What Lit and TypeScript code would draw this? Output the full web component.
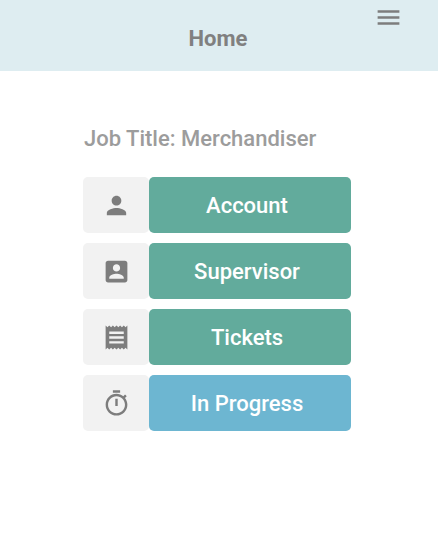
import { LitElement, html, css, svg } from "lit";
import { customElement } from "lit/decorators.js";
import { classMap } from "lit/directives/class-map.js";

interface Entry {
  label: string;
  icon: string;
  active?: boolean;
}

const MENU = "M3 18h18v-2H3v2zm0-5h18v-2H3v2zm0-7v2h18V6H3z";

const ENTRIES: Entry[] = [
  {
    label: "Account",
    icon: "M12 12c2.21 0 4-1.79 4-4s-1.79-4-4-4-4 1.79-4 4 1.79 4 4 4zm0 2c-2.67 0-8 1.34-8 4v2h16v-2c0-2.66-5.33-4-8-4z",
  },
  {
    label: "Supervisor",
    icon: "M3 5v14c0 1.1.89 2 2 2h14c1.1 0 2-.9 2-2V5c0-1.1-.9-2-2-2H5c-1.11 0-2 .9-2 2zm12 4c0 1.66-1.34 3-3 3s-3-1.34-3-3 1.34-3 3-3 3 1.34 3 3zm-9 8c0-2 4-3.1 6-3.1s6 1.1 6 3.1v1H6v-1z",
  },
  {
    label: "Tickets",
    icon: "M18 17H6v-2h12v2zm0-4H6v-2h12v2zm0-4H6V7h12v2zM3 22l1.5-1.5L6 22l1.5-1.5L9 22l1.5-1.5L12 22l1.5-1.5L15 22l1.5-1.5L18 22l1.5-1.5L21 22V2l-1.5 1.5L18 2l-1.5 1.5L15 2l-1.5 1.5L12 2l-1.5 1.5L9 2 7.5 3.5 6 2 4.5 3.5 3 2v20z",
  },
  {
    label: "In Progress",
    icon: "M15 1H9v2h6V1zm-4 13h2V8h-2v6zm8.03-6.61l1.42-1.42c-.43-.51-.9-.99-1.41-1.41l-1.42 1.42C16.07 4.74 14.12 4 12 4c-4.97 0-9 4.03-9 9s4.02 9 9 9 9-4.03 9-9c0-2.12-.74-4.07-1.97-5.61zM12 20c-3.87 0-7-3.13-7-7s3.13-7 7-7 7 3.13 7 7-3.13 7-7 7z",
    active: true,
  },
];

const icon = (d: string) => html`
  <svg class="icon" viewBox="0 0 24 24" aria-hidden="true">${svg`<path d=${d}></path>`}</svg>
`;

@customElement("app-root")
export class AppRoot extends LitElement {
  static styles = css`
    :host {
      display: block;
      min-height: 100vh;
      background: #fff;
      font-family: Roboto, "Liberation Sans", sans-serif;
      font-size: 22px;
      line-height: 28px;
    }
    header {
      display: grid;
      grid-template-columns: 1fr auto 1fr;
      align-items: start;
      box-sizing: border-box;
      height: 71px;
      padding: 3px 35px 0 33px;
      background: #deedf1;
    }
    h1 {
      grid-column: 2;
      margin: 0;
      padding-top: 22px;
      font-size: 22px;
      font-weight: 700;
      color: #808080;
    }
    .menu {
      justify-self: end;
      display: flex;
      padding: 0;
      border: 0;
      background: none;
      cursor: pointer;
    }
    .icon {
      display: block;
      width: 29px;
      height: 29px;
      fill: #7d7d7d;
    }
    main {
      padding: 54px 87px 0 83px;
    }
    h2 {
      margin: 0 0 24px;
      padding-left: 1px;
      font-size: 22px;
      font-weight: 500;
      color: #9c9c9c;
      white-space: nowrap;
    }
    ul {
      display: grid;
      gap: 10px;
      margin: 0;
      padding: 0;
      list-style: none;
    }
    li {
      display: flex;
      height: 56px;
    }
    .tile {
      flex: none;
      display: flex;
      align-items: center;
      justify-content: center;
      width: 66px;
      border-radius: 5px;
      background: #f2f2f2;
    }
    .action {
      flex: 1;
      padding: 2px 6px 0 0;
      border: 0;
      border-radius: 5px;
      background: #62ab9c;
      color: #fff;
      font: inherit;
      font-weight: 500;
      cursor: pointer;
    }
    .active {
      background: #6db6d1;
    }
  `;

  render() {
    return html`
      <header>
        <h1>Home</h1>
        <button class="menu" type="button" aria-label="Menu">${icon(MENU)}</button>
      </header>
      <main>
        <h2>Job Title: Merchandiser</h2>
        <ul>
          ${ENTRIES.map(
            (e) => html`
              <li>
                <span class="tile">${icon(e.icon)}</span>
                <button type="button" class=${classMap({ action: true, active: !!e.active })}>
                  ${e.label}
                </button>
              </li>
            `
          )}
        </ul>
      </main>
    `;
  }
}
